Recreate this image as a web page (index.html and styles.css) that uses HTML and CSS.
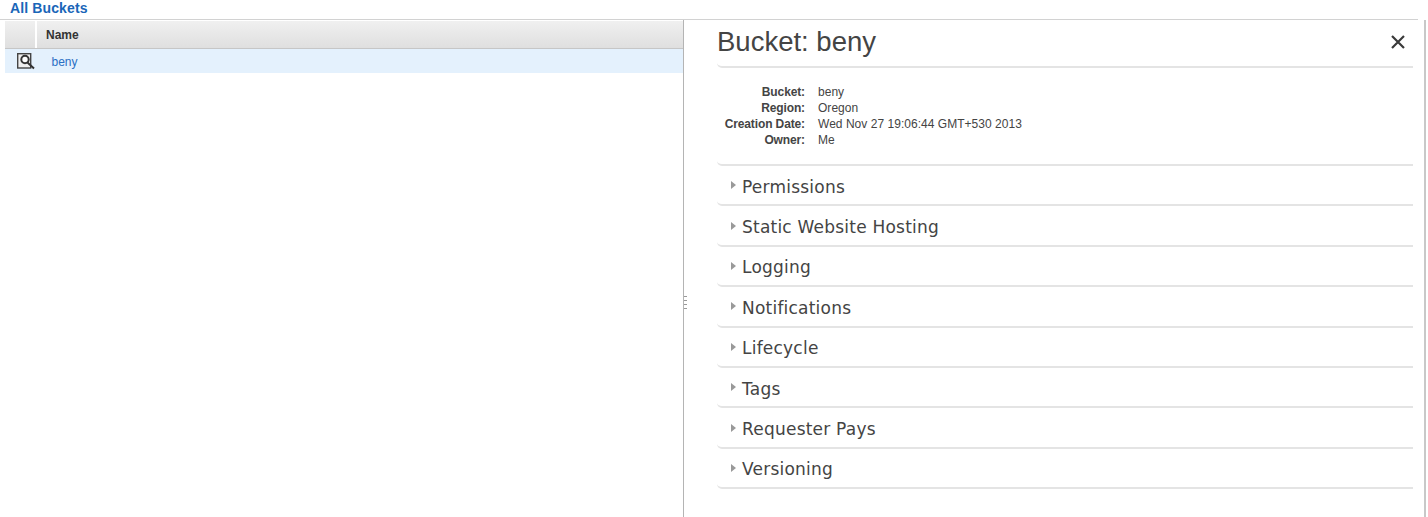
FILE: index.html
```html
<!DOCTYPE html>
<html lang="en">
<head>
<meta charset="utf-8">
<title>All Buckets</title>
<link rel="stylesheet" href="styles.css">
</head>
<body>
<div class="topbar"><h1 class="crumb">All Buckets</h1></div>
<div class="split">
  <section class="list">
    <div class="thead">
      <div class="cell-icon"></div>
      <div class="cell-name">Name</div>
    </div>
    <div class="row">
      <div class="row-icon">
        <svg width="19" height="17" viewBox="0 0 19 17">
          <rect x="0.7" y="0.7" width="13" height="14.3" fill="#eee" stroke="#444" stroke-width="1.4"/>
          <circle cx="8" cy="6.5" r="3.7" fill="#fff" stroke="#333" stroke-width="2"/>
          <path d="M10.5 9.5 L17 15.5" stroke="#333" stroke-width="2"/>
        </svg>
      </div>
      <a class="row-link" href="#">beny</a>
    </div>
  </section>
  <div class="divider"><span class="grip"></span></div>
  <section class="details">
    <header class="title-row">
      <h2 class="title">Bucket: beny</h2>
      <svg class="close" width="16" height="16" viewBox="0 0 16 16"><path d="M2 2 L14 14 M14 2 L2 14" stroke="#3a3a3a" stroke-width="2.2"/></svg>
    </header>
    <dl class="props">
      <dt>Bucket:</dt><dd>beny</dd>
      <dt>Region:</dt><dd>Oregon</dd>
      <dt>Creation Date:</dt><dd>Wed Nov 27 19:06:44 GMT+530 2013</dd>
      <dt>Owner:</dt><dd>Me</dd>
    </dl>
    <div class="acc"><i class="tri"></i>Permissions</div>
    <div class="acc"><i class="tri"></i>Static Website Hosting</div>
    <div class="acc"><i class="tri"></i>Logging</div>
    <div class="acc"><i class="tri"></i>Notifications</div>
    <div class="acc"><i class="tri"></i>Lifecycle</div>
    <div class="acc"><i class="tri"></i>Tags</div>
    <div class="acc"><i class="tri"></i>Requester Pays</div>
    <div class="acc"><i class="tri"></i>Versioning</div>
  </section>
</div>
```
FILE: styles.css
```css
* { box-sizing: border-box; }
html, body { height: 100%; }
body {
  margin: 0;
  height: 517px;
  overflow: hidden;
  background: #fff;
  font-family: "Liberation Sans", Arial, sans-serif;
  font-size: 12px;
  color: #444;
  display: flex;
  flex-direction: column;
}
.topbar {
  height: 20px;
  margin-right: 10px;
  border-bottom: 1px solid #d2d2d2;
  padding-left: 10px;
  flex: none;
}
.crumb {
  margin: 0;
  font-size: 14px;
  line-height: 16px;
  letter-spacing: 0.12px;
  font-weight: bold;
  color: #1a66b8;
}
.split { flex: 1; display: flex; min-height: 0; padding-left: 5px; padding-right: 2px; }
.list { width: 678px; flex: none; }
.thead {
  margin-top: 1px;
  height: 28px;
  display: flex;
  background: linear-gradient(#f0f0f0, #dfdfdf);
  border-bottom: 1px solid #c6c6c6;
}
.cell-icon { width: 32px; border-right: 2px solid #fff; }
.cell-name {
  padding-left: 9px;
  font-weight: bold;
  line-height: 29px;
  color: #333;
}
.row { height: 24px; background: #e4f1fd; display: flex; align-items: center; }
.row-icon { width: 33px; padding-left: 12px; display: flex; }
.row-link { margin-left: 13.5px; padding-top: 2px; color: #2a6fc4; text-decoration: none; }
.divider {
  width: 1px;
  flex: none;
  background: #b4b4b4;
  position: relative;
}
.grip {
  position: absolute;
  left: 1px;
  top: 276px;
  width: 3px;
  height: 14px;
  background: repeating-linear-gradient(#999 0 1px, #fff 1px 4px);
}
.details {
  flex: 1;
  padding: 0 11px 0 33px;
  border-right: 2px solid #c8c8c8;
}
.title-row {
  height: 48px;
  border-bottom: 2px solid #e4e4e4;
  border-radius: 0 0 0 5px;
  display: flex;
  align-items: flex-start;
  justify-content: space-between;
}
.title {
  margin: 4px 0 0;
  font-size: 27.5px;
  line-height: 36px;
  font-weight: normal;
  color: #444;
}
.close { margin-top: 14px; margin-right: 7px; }
.props {
  margin: 0;
  height: 98px;
  padding-top: 16px;
  border-bottom: 2px solid #e4e4e4;
  border-radius: 0 0 0 5px;
  display: grid;
  grid-template-columns: 88px 1fr;
  grid-auto-rows: 16px;
  column-gap: 13px;
  line-height: 16px;
}
.props dt { font-weight: bold; text-align: right; letter-spacing: -0.12px; }
.props dd { margin: 0; letter-spacing: 0.03px; }
.acc {
  height: 40.4px;
  border-bottom: 2px solid #e4e4e4;
  border-radius: 0 0 0 5px;
  display: flex;
  align-items: center;
  padding-left: 14px;
  padding-top: 3px;
  font-family: "DejaVu Sans", Verdana, sans-serif;
  font-size: 17px;
  letter-spacing: 0.22px;
  color: #444;
}
.tri {
  width: 0;
  height: 0;
  margin-right: 6px;
  margin-bottom: 3px;
  border-left: 5px solid #999;
  border-top: 4px solid transparent;
  border-bottom: 4px solid transparent;
}
```
